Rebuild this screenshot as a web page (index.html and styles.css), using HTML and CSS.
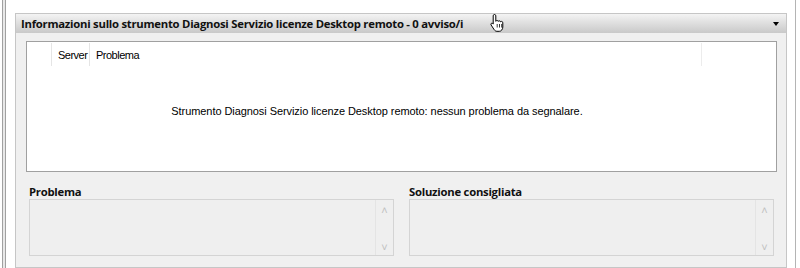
FILE: index.html
```html
<!DOCTYPE html>
<html lang="it">
<head>
  <meta charset="UTF-8" />
  <title>Diagnosi Servizio licenze Desktop remoto</title>
  <link rel="stylesheet" href="styles.css">
</head>
<body>
  <div class="frame">
    <div class="rail"></div>
    <div class="content">
      <div class="panel">
        <div class="panel-head">
          <span class="title">Informazioni sullo strumento Diagnosi Servizio licenze Desktop remoto - 0 avviso/i</span>
          <svg class="cursor" width="16" height="20" viewBox="0 0 16 20">
            <path d="M5.5 1.5c.8 0 1.3.5 1.3 1.3v5.5c.3-.6.8-.8 1.3-.8.6 0 1 .4 1.1.9.3-.4.7-.6 1.2-.6.6 0 1 .4 1.1 1 .3-.3.6-.4 1-.4.8 0 1.3.6 1.3 1.4v4.2c0 2.1-1.4 4.3-3.5 4.3H8c-1.3 0-2.1-.6-2.8-1.6L2.1 12c-.4-.6-.3-1.3.2-1.6.6-.4 1.3-.2 1.7.4l.2.3V2.8c0-.8.5-1.3 1.3-1.3z" fill="#fff" stroke="#000" stroke-width="1"/>
            <path d="M8.2 11v3.5M10.5 11v3.5M12.7 11v3.5" stroke="#000" stroke-width=".8"/>
          </svg>
          <span class="arrow"></span>
        </div>
        <div class="panel-body">
          <div class="list">
            <div class="list-head">
              <span class="col col-icon"></span>
              <span class="col col-server">Server</span>
              <span class="col col-problem">Problema</span>
              <span class="col col-rest"></span>
            </div>
            <div class="list-msg">
              <span class="msg">Strumento Diagnosi Servizio licenze Desktop remoto: nessun problema da segnalare.</span>
            </div>
          </div>
          <div class="details">
            <div class="field">
              <div class="field-label">Problema</div>
              <div class="textbox">
                <div class="text"></div>
                <div class="scroll"><span>&#x2C4;</span><span>&#x2C5;</span></div>
              </div>
            </div>
            <div class="field">
              <div class="field-label">Soluzione consigliata</div>
              <div class="textbox">
                <div class="text"></div>
                <div class="scroll"><span>&#x2C4;</span><span>&#x2C5;</span></div>
              </div>
            </div>
          </div>
        </div>
      </div>
      <div class="side-line"></div>
    </div>
  </div>
</body>
</html>
```

FILE: styles.css
```css
body {
  margin: 0;
  background: #fff;
  font-family: 'Liberation Sans', Arial, sans-serif;
  font-size: 11px;
  color: #000;
}
.frame {
  display: flex;
  height: 268px;
  overflow: hidden;
}
.rail {
  width: 2px;
  margin-left: 2px;
  border-left: 1px solid #a0a0a0;
  border-right: 1px solid #a0a0a0;
  background: #e8e8e8;
}
.content {
  display: flex;
  padding: 13px 0 0 9px;
  flex: 1;
}
.panel {
  width: 770px;
  background: #f0f0f0;
  border: 1px solid #c6c6c6;
  display: flex;
  flex-direction: column;
}
.side-line {
  width: 1px;
  margin-left: 8px;
  margin-top: -13px;
  background: #b4b4b4;
}
.panel-head {
  height: 19px;
  display: flex;
  align-items: center;
  padding: 0 0 0 5px;
  background: linear-gradient(#f4f4f4, #e2e2e2 40%, #c9c9c9);
  position: relative;
}
.title {
  font-family: 'Open Sans', 'Noto Sans', sans-serif;
  font-weight: 700;
  font-size: 11.3px;
  letter-spacing: -0.25px;
  color: #111;
}
.cursor {
  position: absolute;
  left: 473px;
  top: -1px;
}
.arrow {
  margin-left: auto;
  margin-right: 7px;
  width: 0;
  height: 0;
  border-left: 3.5px solid transparent;
  border-right: 3.5px solid transparent;
  border-top: 4px solid #000;
}
.panel-body {
  padding: 8px 9px 0 10px;
}
.list {
  height: 129px;
  background: #fff;
  border: 1px solid #a0a0a0;
  display: flex;
  flex-direction: column;
}
.list-head {
  display: flex;
  height: 24px;
}
.col {
  display: flex;
  align-items: center;
  padding-left: 6px;
  border-right: 1px solid #e5e5e5;
  margin: 1px 0 0;
  letter-spacing: -0.5px;
  color: #000;
}
.col-icon { width: 18px; }
.col-server { width: 31px; }
.col-problem { width: 605px; border-right-color: #ececec; }
.col-rest { border: none; }
.list-msg {
  width: 700px;
  text-align: center;
  padding-top: 39px;
}
.msg {
  letter-spacing: -0.07px;
}
.details {
  display: flex;
  gap: 15px;
  padding: 12px 0 0 3px;
}
.field {
  width: 365px;
}
.field-label {
  font-family: 'Open Sans', 'Noto Sans', sans-serif;
  font-weight: 700;
  font-size: 11.3px;
  letter-spacing: -0.25px;
  height: 15px;
  line-height: 15px;
  color: #111;
}
.textbox {
  height: 55px;
  border: 1px solid #d4d4d4;
  display: flex;
  background: #efefef;
}
.text { flex: 1; }
.scroll {
  width: 17px;
  border-left: 1px solid #e4e4e4;
  display: flex;
  flex-direction: column;
  justify-content: space-between;
  align-items: center;
  padding: 4px 0 2px;
  color: #c0c0c0;
  font-size: 11px;
  line-height: 12px;
}
```
